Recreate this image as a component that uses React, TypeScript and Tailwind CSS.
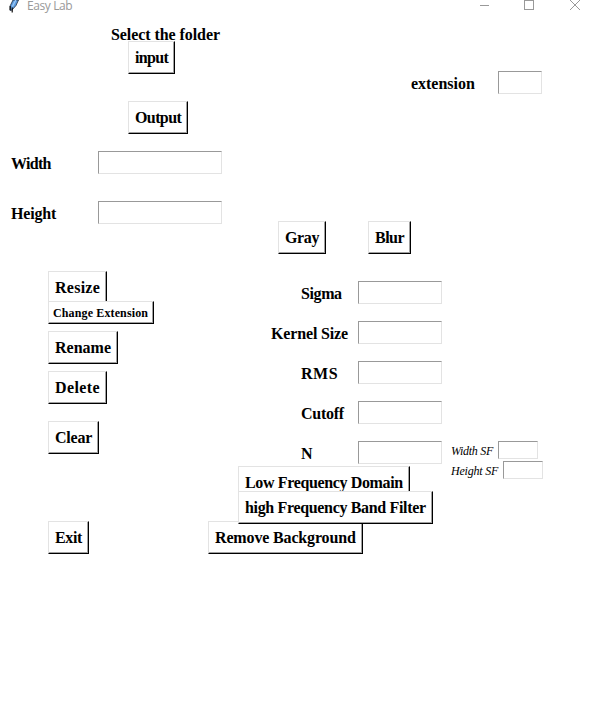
import React from "react";

const BOLD = "font-['Liberation_Serif',serif] font-bold text-[16px] leading-[17px] whitespace-nowrap text-black";

function Button({ text, className, small = false }: { text: string; className: string; small?: boolean }) {
  return (
    <button
      className={`block shrink-0 border border-t-[#e3e3e3] border-l-[#e3e3e3] border-r-black border-b-black bg-white ${
        small ? "h-[23px]" : "h-[33px]"
      } ${className}`}
    >
      <span
        className={`flex h-full w-full items-center border-r border-b border-[#a0a0a0] font-['Liberation_Serif',serif] font-bold whitespace-nowrap text-black ${
          small ? "pl-1 text-[12px] leading-[14px] pt-0.5" : "pt-px pl-1.5 text-[16px] leading-[17px]"
        }`}
      >
        {text}
      </span>
    </button>
  );
}

function Entry({ className }: { className: string }) {
  return (
    <input
      className={`block shrink-0 border border-t-[#999] border-l-[#999] border-r-[#e3e3e3] border-b-[#e3e3e3] bg-white outline-none ${className}`}
    />
  );
}

function Field({ text, className }: { text: string; className: string }) {
  return (
    <div className="flex h-[23px]">
      <label className={`${BOLD} w-[150px] shrink-0 pt-1 ${className}`}>{text}</label>
      <Entry className="h-[23px] w-[84px]" />
    </div>
  );
}

function TitleBar() {
  return (
    <header className="flex h-[21px] items-start">
      <svg className="ml-2 h-[13px] w-3 shrink-0" viewBox="0 0 12 13">
        <path d="M5 0 2.2 5.8 2 10.5 4 10 8 5.5 10.5 0z" fill="#5b9be0" stroke="#1f2937" strokeWidth="0.8" />
        <path d="M7.8 0 4.4 6.5" stroke="#9cc9f5" strokeWidth="1.3" />
        <path d="M4.3 7.5 4.2 12.5M2.2 6V10" fill="none" stroke="#111" strokeWidth="1.2" />
      </svg>
      <span className="ml-[7px] h-[14px] w-[453px] font-['Open_Sans',sans-serif] text-[12px] leading-[12px] tracking-[-0.4px] text-[#999]">
        Easy Lab
      </span>
      <svg className="h-3 w-[110px] shrink-0" viewBox="0 0 110 12" fill="none" stroke="#999">
        <path d="M-1 5.5H9" shapeRendering="crispEdges" />
        <path d="M44.5.5h9v9h-9z" shapeRendering="crispEdges" />
        <path d="m90 0 10 10M100 0 90 10" />
      </svg>
    </header>
  );
}

export default function App() {
  return (
    <main className="h-[717px] w-[594px] overflow-hidden bg-white">
      <TitleBar />

      <section className="flex h-[130px]">
        <div className="w-[411px] pt-[5px] pl-[111px]">
          <div className={`${BOLD} h-[15px] tracking-[-0.07px]`}>Select the folder</div>
          <div className="flex flex-col gap-[27px] pl-[17px]">
            <Button text="input" className="relative w-[47px] tracking-[-0.65px]" />
            <Button text="Output" className="w-[60px] tracking-[-0.6px]" />
          </div>
        </div>
        <div className="flex pt-[50px]">
          <label className={`${BOLD} w-[87px] pt-1 tracking-[-0.02px]`}>extension</label>
          <Entry className="h-[23px] w-[44px]" />
        </div>
      </section>

      <section className="flex h-[70px] flex-col gap-[27px] pl-[11px]">
        <div className="flex">
          <label className={`${BOLD} w-[87px] pt-1 tracking-[-0.7px]`}>Width</label>
          <Entry className="h-[23px] w-[124px]" />
        </div>
        <div className="flex">
          <label className={`${BOLD} w-[87px] pt-1 tracking-[-0.2px]`}>Height</label>
          <Entry className="h-[23px] w-[124px]" />
        </div>
      </section>

      <section className="flex">
        <div className="w-[208px] shrink-0 pt-[50px] pl-12">
          <Button text="Resize" className="w-[59px] tracking-[0.25px]" />
          <Button small text="Change Extension" className="relative mt-[-3px] w-[106px] tracking-[0.13px]" />
          <Button text="Rename" className="mt-[7px] w-[70px]" />
          <Button text="Delete" className="mt-[7px] w-[59px] tracking-[0.4px]" />
          <Button text="Clear" className="mt-[17px] w-[51px] tracking-[-0.24px]" />
          <Button text="Exit" className="mt-[67px] w-[41px] tracking-[-0.35px]" />
        </div>

        <div className="flex flex-col">
          <div className="flex h-[60px] gap-[42px] pl-[70px]">
            <Button text="Gray" className="w-[48px] tracking-[-0.38px]" />
            <Button text="Blur" className="w-[43px] tracking-[-0.5px]" />
          </div>
          <div className="flex h-[185px]">
            <div className="flex flex-col gap-[17px]">
              <Field text="Sigma" className="pl-[93px] tracking-[-0.4px]" />
              <Field text="Kernel Size" className="pl-[63px] tracking-[-0.15px]" />
              <Field text="RMS" className="pl-[93px] tracking-[0.5px]" />
              <Field text="Cutoff" className="pl-[93px] tracking-[-0.25px]" />
              <Field text="N" className="pl-[93px]" />
            </div>
            <div className="flex flex-col gap-0.5 pt-[160px] pl-[9px] font-['Liberation_Serif',serif] text-[12px] leading-[14px] text-black italic">
              <div className="flex">
                <label className="w-[47px] pt-[3px] tracking-[-0.3px] whitespace-nowrap">Width SF</label>
                <Entry className="h-[18px] w-[40px]" />
              </div>
              <div className="flex">
                <label className="w-[52px] pt-[3px] tracking-[-0.2px] whitespace-nowrap">Height SF</label>
                <Entry className="h-[18px] w-[40px]" />
              </div>
            </div>
          </div>
          <Button text="Low Frequency Domain" className="ml-[30px] w-[172px] tracking-[-0.36px]" />
          <Button text="high Frequency Band Filter" className="relative z-10 mt-[-8px] ml-[30px] w-[195px] tracking-[-0.34px]" />
          <Button text="Remove Background" className="mt-[-3px] w-[155px] tracking-[-0.15px]" />
        </div>
      </section>
    </main>
  );
}
